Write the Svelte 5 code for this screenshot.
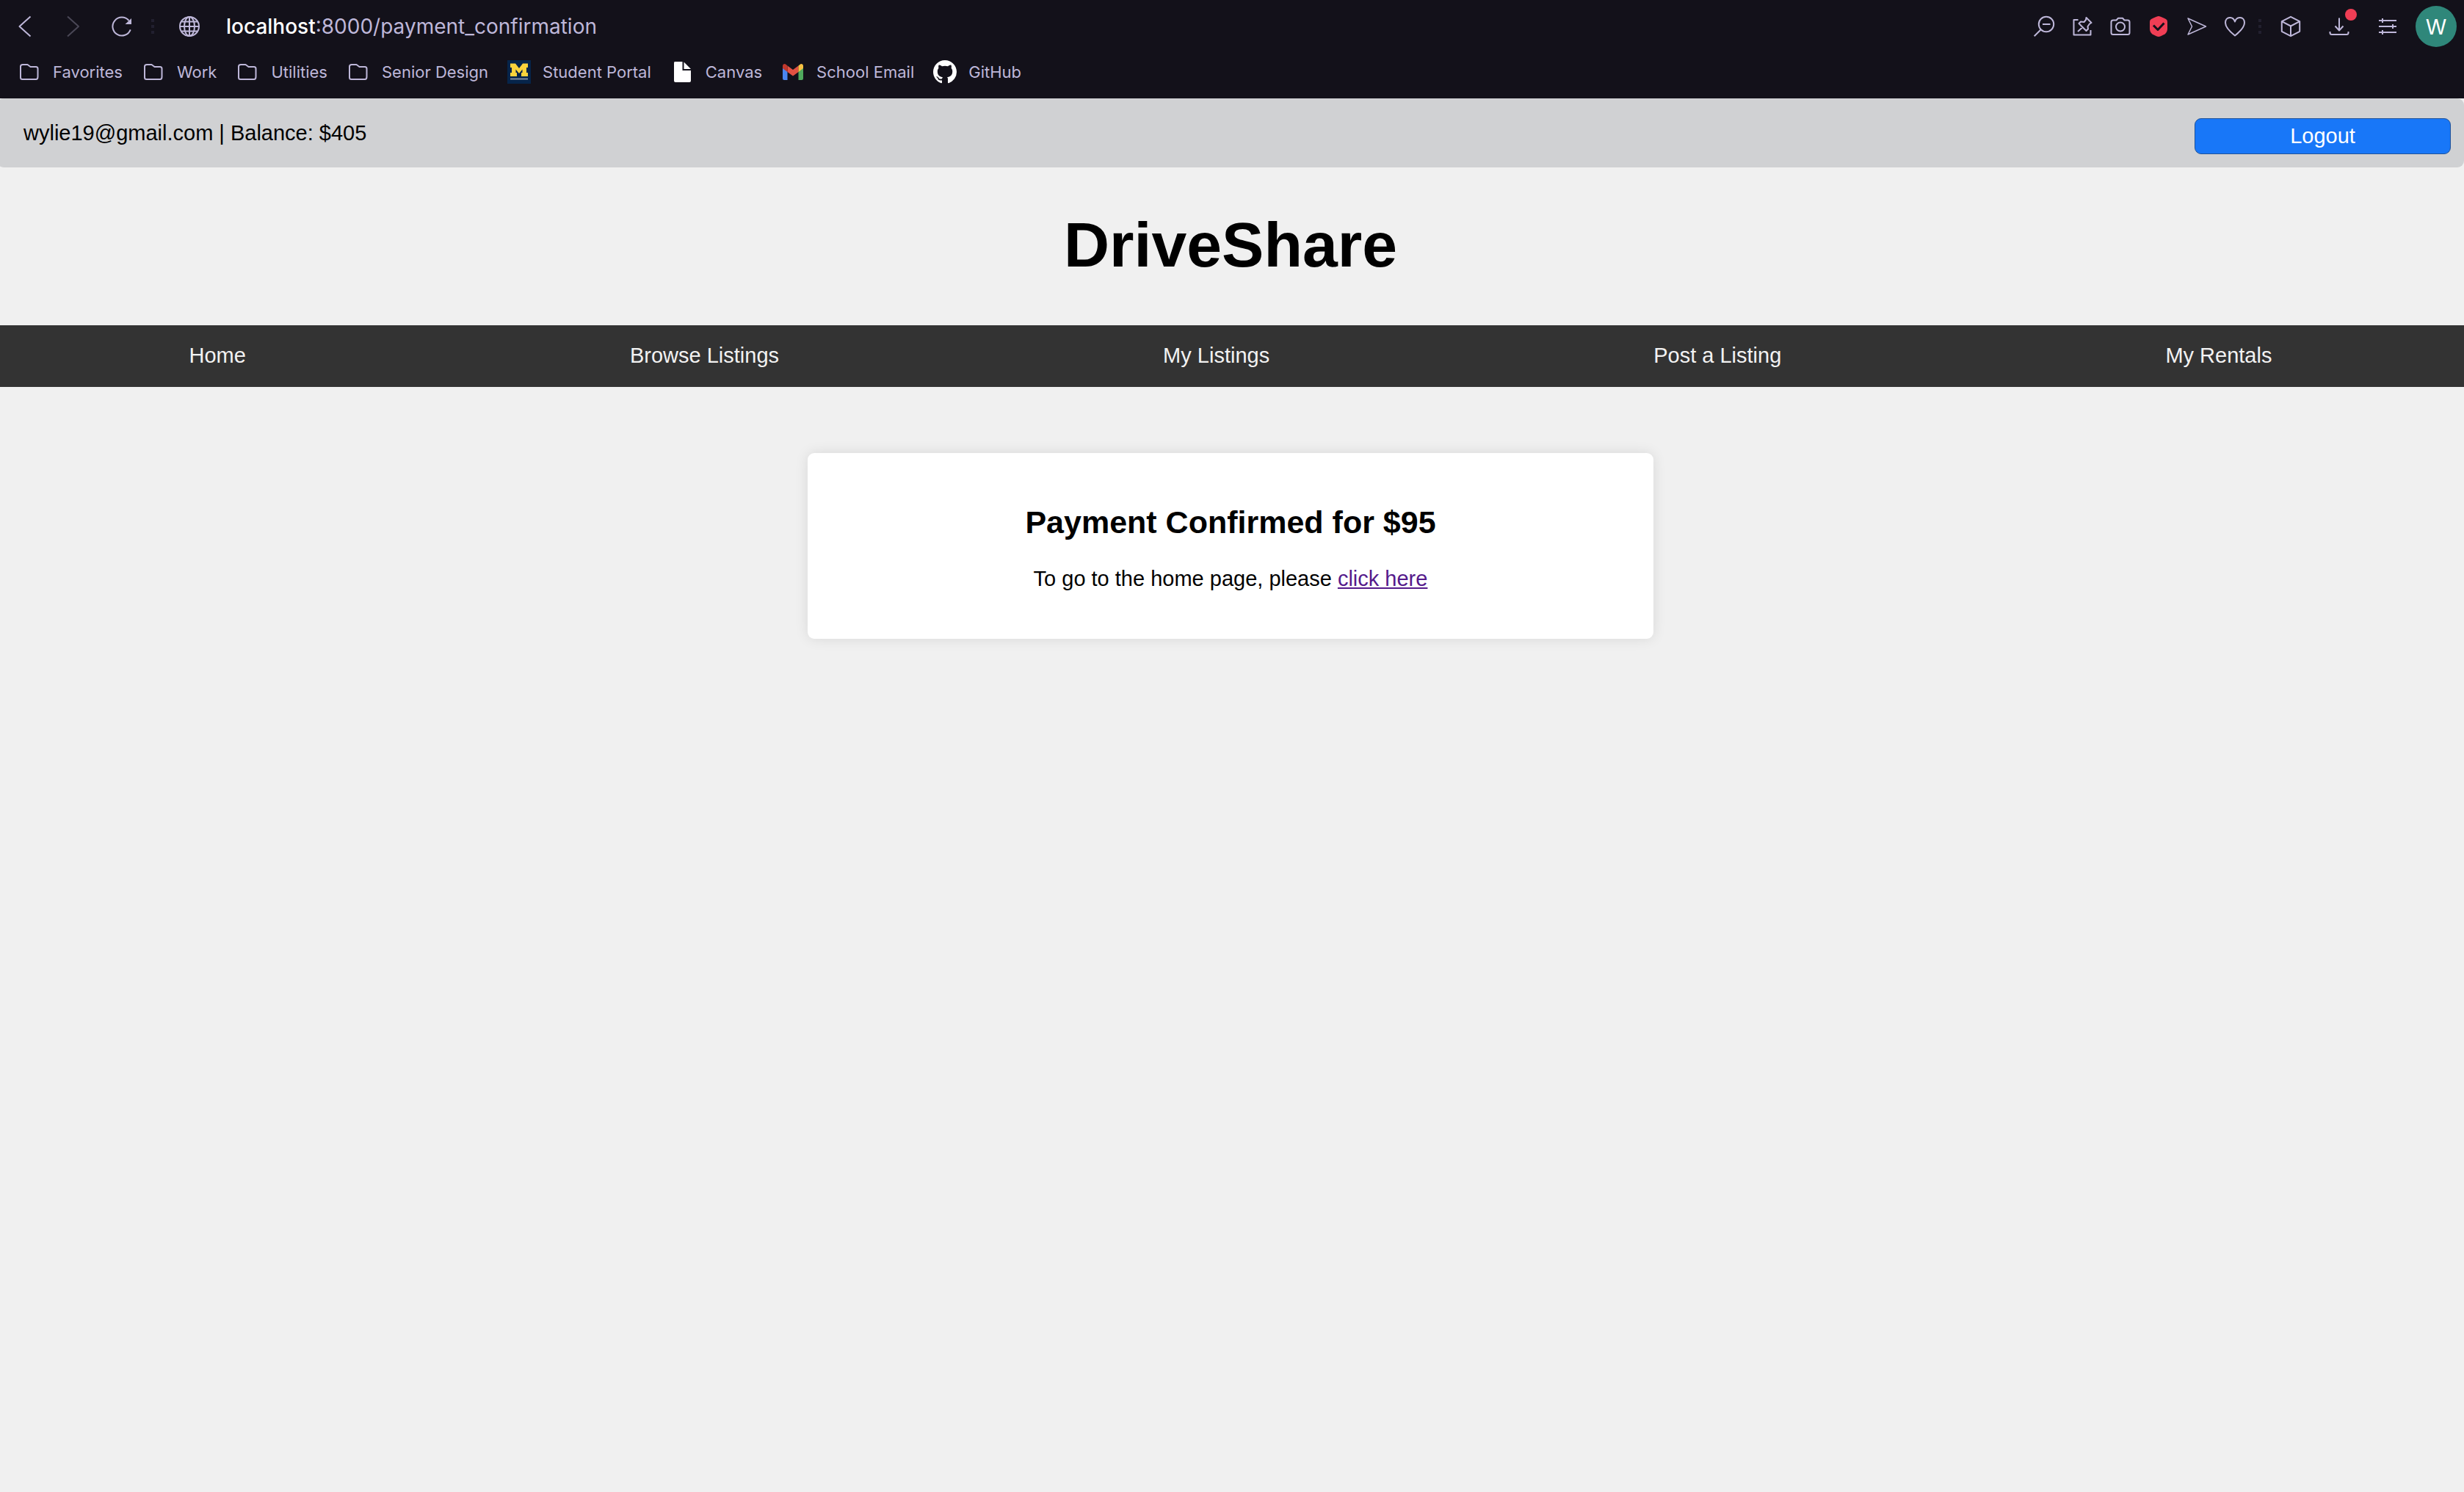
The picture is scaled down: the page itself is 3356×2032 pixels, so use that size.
<script>
  const folders = ['Favorites', 'Work', 'Utilities', 'Senior Design'];
  const navItems = ['Home', 'Browse Listings', 'My Listings', 'Post a Listing', 'My Rentals'];
</script>

<div class="window">
  <header class="chrome">
    <div class="toolbar">
      <div class="history">
        <button class="icon" aria-label="Back"><svg viewBox="0 0 28 28"><path d="M21.500 .5 6.500 14l15 13.500" /></svg></button>
        <button class="icon dim" aria-label="Forward"><svg viewBox="0 0 28 28"><path d="M6 .5 21 14 6 27.500" /></svg></button>
        <button class="icon" aria-label="Reload">
          <svg viewBox="0 0 28 28"><path d="M25.700 18.300A12.500 12.500 0 1 1 23.500 6" /><path class="solid" d="M27 3v8h-8.500z" /></svg>
        </button>
      </div>
      <span class="dots"></span>
      <svg class="glyph globe" viewBox="0 0 28 28">
        <circle cx="14" cy="14" r="13" /><ellipse cx="14" cy="14" rx="7" ry="13" />
        <path d="M14 1v26M1 14h26M3 7.500h22M3 20.500h22" />
      </svg>
      <div class="url"><b>localhost</b>:8000/payment_confirmation</div>
      <div class="actions">
        <button class="icon" aria-label="Zoom"><svg viewBox="0 0 28 28"><circle cx="17" cy="11" r="10.200" /><path d="M9.500 18.500.7 27.300M12 11h10.500" /></svg></button>
        <button class="icon" aria-label="Pin">
          <svg viewBox="0 0 28 28"><path d="M8.500 5H2.500v20.500h23V19" /><path d="m19.500 2 7 7-2.500 1.500-2.500 3.500.5 3.500-2.500 2.500-10-10L12 7.500l4.500.5L19 5zM14 15.500 8 21" /></svg>
        </button>
        <button class="icon" aria-label="Snapshot">
          <svg viewBox="0 0 28 28"><path d="M4 5.500h4.500L11 2.800h6l2.500 2.700H24q2.500 0 2.500 2.500v14.500q0 2.500-2.500 2.500H4q-2.500 0-2.500-2.500V8Q1.500 5.500 4 5.500z" /><circle cx="14" cy="14.500" r="6" /></svg>
        </button>
        <button class="icon" aria-label="Ad blocker">
          <svg viewBox="0 0 28 28"><path class="shield" d="M14 0q2 .2 10 4 2 1 2 3.500V17q0 5-3.500 7.500L17 27.300q-3 1.400-6 0l-5.500-2.800Q2 22 2 17V7.500Q2 5 4 4 12 .2 14 0z" /><path class="tick" d="m7 12.500 6 6 8.500-9" /></svg>
        </button>
        <button class="icon thin" aria-label="Send"><svg viewBox="0 0 28 28"><path d="M2 3 26.500 14 2 25l5.500-11z" /></svg></button>
        <button class="icon" aria-label="Favorite">
          <svg viewBox="0 0 28 28"><path d="M14 7.500C12 1.500 8.500 2 7 2 3.500 2 1 5 1 9c0 6 6 12 13 17.500C21 21 27 15 27 9c0-4-2.500-7-6-7-1.500 0-5-.5-7 5.500z" /></svg>
        </button>
      </div>
      <span class="dots"></span>
      <div class="tools">
        <button class="icon" aria-label="Workspaces"><svg viewBox="0 0 28 28"><path d="m14 .8 12.200 6.400v13.600L14 27.200 1.800 20.800V7.200zM1.800 7.200 14 13.500l12.200-6.300M14 13.500v13.700" /></svg></button>
        <button class="icon download" aria-label="Downloads">
          <svg viewBox="0 0 28 28"><path d="M14 2.500v16.500M8.500 13.500l5.500 6 5.500-6M1.500 21v1.500q0 2.500 2.500 2.500h20q2.500 0 2.500-2.500V21" /></svg>
          <span class="badge"></span>
        </button>
        <button class="icon" aria-label="Settings"><svg viewBox="0 0 28 28"><path d="M2 6h24M2 14h24M2 22h24M7 3v6M21 11v6M7 19v6" /></svg></button>
      </div>
      <button class="avatar">W</button>
    </div>

    <nav class="bookmarks" aria-label="Bookmarks">
      {#each folders as name}
        <a href="#folder"><svg class="glyph folder" viewBox="0 0 32 24"><path d="M7 2h6.500l4 3H25q2.500 0 2.500 2.500v11Q27.500 22 25 22H6.500Q4 22 4 19.500v-15Q4 2 7 2z" /></svg>{name}</a>
      {/each}
      <a href="#portal">
        <svg class="favicon" viewBox="0 0 32 32"><path fill="#06244a" d="M0 0h32v32H0z" /><path fill="#fbd33c" d="M4 4.500h7l5 6.500 5-6.500h7V10h-2v7h2v5h-9v-5h1.500v-4.500L16 18l-4.500-5.500V17H13v5H4v-5h2v-7H4z" /><path fill="#7c8ba0" d="M4 24.500h24v2H4z" /></svg>
        Student Portal
      </a>
      <a href="#canvas">
        <svg class="favicon" viewBox="0 0 32 32"><path fill="#fff" d="M6 2h10.500v12H28v14q0 2-2 2H7q-2 0-2-2V4q0-2 1-2z" /><path fill="#fff" d="M18.500 2.500 28 12h-9.500z" /></svg>
        Canvas
      </a>
      <a href="#mail">
        <svg class="favicon" viewBox="0 0 32 32">
          <path fill="#4a86f0" d="M2 10.500 8.500 15v12H4q-2 0-2-2z" /><path fill="#4fa95d" d="M30 10.500 23.500 15v12H28q2 0 2-2z" />
          <path fill="#e25142" d="M8.500 7.500 16 13l7.500-5.500V16L16 21.500 8.500 16z" /><path fill="#c0382d" d="M2 11V8q0-3 3-3 1 0 3.500 2.500V16z" /><path fill="#f6c143" d="M30 11V8q0-3-3-3-1 0-3.500 2.500V16z" />
        </svg>
        School Email
      </a>
      <a href="#github">
        <svg class="favicon" viewBox="0 0 16 16"><path fill="#fff" d="M8 0C3.580 0 0 3.580 0 8c0 3.540 2.290 6.530 5.470 7.590.4.070.55-.17.55-.38 0-.19-.01-.82-.01-1.490-2.010.37-2.530-.49-2.690-.94-.09-.23-.48-.94-.82-1.130-.28-.15-.68-.52-.01-.53.63-.01 1.080.58 1.230.82.720 1.210 1.870.87 2.330.66.070-.52.280-.87.510-1.070-1.780-.2-3.640-.89-3.640-3.950 0-.87.310-1.590.820-2.150-.08-.2-.36-1.020.08-2.120 0 0 .67-.21 2.200.82.640-.18 1.320-.27 2-.27s1.360.09 2 .27c1.530-1.040 2.200-.82 2.200-.82.440 1.100.16 1.920.08 2.120.51.56.82 1.270.82 2.150 0 3.070-1.870 3.750-3.650 3.950.29.25.54.73.54 1.480 0 1.070-.01 1.930-.01 2.200 0 .21.15.46.55.38A8.010 8.010 0 0 0 16 8c0-4.420-3.580-8-8-8z" /></svg>
        GitHub
      </a>
    </nav>
  </header>

  <div class="page">
    <div class="account">
      <span>wylie19@gmail.com | Balance: $405</span>
      <button class="logout">Logout</button>
    </div>
    <h1>DriveShare</h1>
    <nav class="menu" aria-label="Main">
      {#each navItems as item}<a href="#page">{item}</a>{/each}
    </nav>
    <main class="card">
      <h2>Payment Confirmed for $95</h2>
      <p>To go to the home page, please <a href="#home">click here</a></p>
    </main>
  </div>
</div>

<style>
  :global(body) { margin: 0; background: #f0f0f0; }
  .window { min-height: 100vh; overflow: hidden; font: 29px/33px Arial, "Liberation Sans", sans-serif; color: #000; }
  button { margin: 0; padding: 0; border: 0; background: none; font: inherit; color: inherit; cursor: pointer; }

  .chrome { background: #13111a; color: #beb7d9; font-family: Inter, "Open Sans", sans-serif; }
  .toolbar { display: flex; align-items: center; height: 72px; padding: 0 10px 0 20px; }
  .history { display: flex; gap: 38px; }
  .icon, .glyph { display: block; flex: none; width: 28px; height: 28px; }
  .icon svg { display: block; width: 28px; height: 28px; overflow: visible; }
  .icon path, .icon circle, .glyph { fill: none; stroke: #beb7d9; stroke-width: 2; stroke-linejoin: round; }
  .icon.dim path { stroke: #4a4756; }
  .icon.thin path { stroke-width: 1.5; }
  .icon .solid { fill: #beb7d9; stroke: none; }
  .icon .shield { fill: #f03e55; stroke: none; }
  .icon .tick { stroke: #13111a; stroke-width: 3; }
  .dots { flex: none; width: 4px; height: 20px; margin: 0 26px; background: repeating-linear-gradient(#22202f 0 4px, transparent 4px 8px); }
  .globe { margin-left: 8px; }
  .url { flex: 1; margin-left: 36px; font-size: 28px; }
  .url b { font-weight: 500; color: #fff; }
  .actions { display: flex; gap: 24px; }
  .actions + .dots { margin: 0 26px 0 18px; }
  .tools { display: flex; gap: 38px; }
  .download { position: relative; }
  .badge { position: absolute; top: -10px; right: -10px; width: 16px; height: 16px; border-radius: 50%; background: #f03e55; }
  .avatar { flex: none; width: 56px; height: 56px; margin-left: 24px; border-radius: 50%; background: #2f877a; color: #fff; }

  .bookmarks { display: flex; gap: 26px; height: 62px; padding: 0 24px; align-items: flex-start; }
  .bookmarks a { display: flex; align-items: center; gap: 16px; height: 52px; color: inherit; font-size: 22px; text-decoration: none; }
  .folder { width: 32px; height: 24px; }
  .favicon { flex: none; width: 32px; height: 32px; }

  .page { margin-left: -4px; }
  .account { display: flex; justify-content: space-between; align-items: flex-start; padding: 27px 18px 18px 36px; border-radius: 9px; background: #d0d1d3; line-height: 41px; }
  .logout { box-sizing: border-box; width: 349px; height: 49px; border: 1px solid #1f5299; border-radius: 9px; background: #1877f8; color: #fff; }
  h1 { margin: 56px 0 60px; font-size: 86px; line-height: 99px; text-align: center; }
  .menu { display: flex; justify-content: space-around; padding: 25px 0 26px; background: #333; }
  .menu a { color: #f2f2f2; text-decoration: none; }
  .card { box-sizing: border-box; width: 1152px; max-width: 100%; margin: 90px auto 0; padding: 36px; border-radius: 9px; background: #fff; box-shadow: 0 0 18px rgba(0, 0, 0, 0.1); text-align: center; }
  h2 { margin: 34px 0 36px; font-size: 43px; line-height: 49px; }
  p { margin: 0 0 29px; }
  p a { color: #551a8b; }
</style>
